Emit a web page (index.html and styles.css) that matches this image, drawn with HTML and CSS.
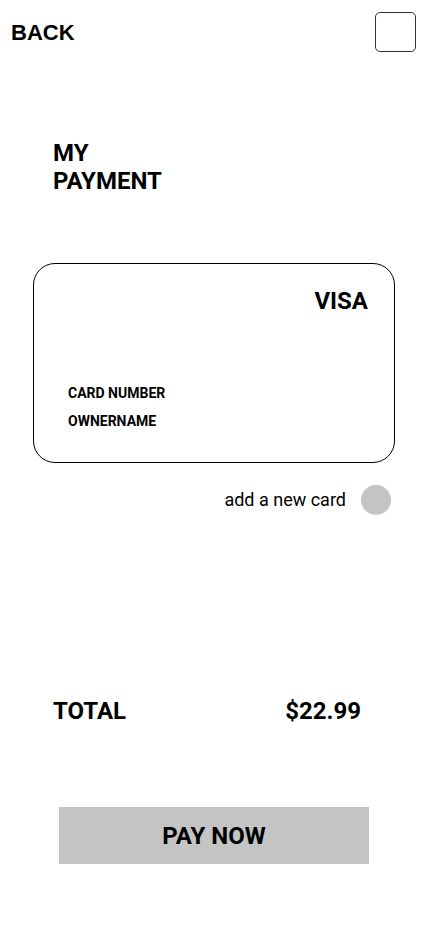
FILE: index.html
```html
<!DOCTYPE html>
<html>
<head>
<meta charset="utf-8">
<link rel="stylesheet" href="styles.css">
</head>
<body>
<div class="page">
  <header class="topbar">
    <span class="back">BACK</span>
    <span class="menu-box"></span>
  </header>
  <h1 class="title">MY<br>PAYMENT</h1>
  <div class="card">
    <div class="brand">VISA</div>
    <div class="card-info">
      <div class="card-line">CARD NUMBER</div>
      <div class="card-line">OWNERNAME</div>
    </div>
  </div>
  <div class="add-row">
    <span class="add-text">add a new card</span>
    <span class="add-dot"></span>
  </div>
  <div class="total-row">
    <span>TOTAL</span>
    <span>$22.99</span>
  </div>
  <button class="pay">PAY NOW</button>
</div>
</body>
</html>
```

FILE: styles.css
```css
* { box-sizing: border-box; }
html, body { margin: 0; padding: 0; background: #fff; }
body { font-family: Roboto, "Liberation Sans", Arial, sans-serif; color: #000; }
.page { width: 428px; height: 926px; display: flex; flex-direction: column; }
.topbar { display: flex; justify-content: space-between; align-items: flex-start; padding: 12px 12px 0 11px; height: 52px; }
.back { font-family: "Liberation Sans", Arial, sans-serif; font-size: 22px; font-weight: 700; line-height: 26px; margin-top: 8px; }
.menu-box { width: 41px; height: 40px; border: 1px solid #333; border-radius: 5px; }
.title { margin: 87px 0 0 53px; font-size: 24px; font-weight: 700; line-height: 28px; }
.card { margin: 68px 0 0 33px; width: 362px; height: 200px; border: 1px solid #000; border-radius: 22px; display: flex; flex-direction: column; justify-content: space-between; padding: 23px 26px 32px 34px; }
.brand { align-self: flex-end; font-size: 24px; font-weight: 700; line-height: 28px; }
.card-info { display: flex; flex-direction: column; gap: 11px; }
.card-line { font-size: 14px; font-weight: 700; line-height: 17px; }
.add-row { display: flex; justify-content: flex-end; align-items: center; gap: 15px; padding-right: 37px; margin-top: 22px; height: 30px; }
.add-text { font-size: 18px; line-height: 20px; }
.add-dot { width: 30px; height: 30px; border-radius: 50%; background: #c4c4c4; }
.total-row { display: flex; justify-content: space-between; margin: 182px 67px 0 53px; font-size: 24px; font-weight: 700; line-height: 28px; }
.pay { margin: 82px 0 0 59px; width: 310px; height: 57px; border: none; background: #c4c4c4; font-family: inherit; font-size: 24px; font-weight: 700; color: #000; padding: 0; }
```
